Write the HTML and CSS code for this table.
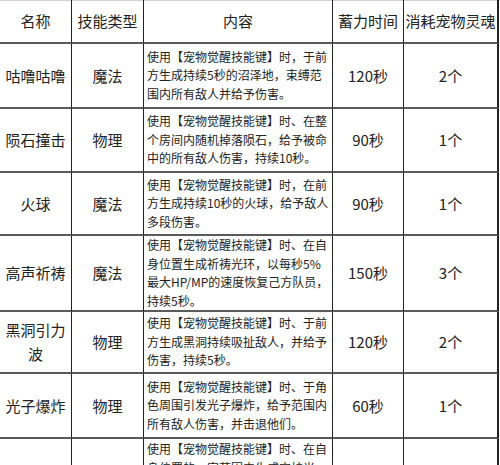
FILE: index.html
```html
<!DOCTYPE html>
<html lang="zh-CN">
<head>
<meta charset="utf-8">
<link rel="stylesheet" href="styles.css">
</head>
<body>
<div class="grid">
  <div class="c h">名称</div>
  <div class="c h">技能类型</div>
  <div class="c h">内容</div>
  <div class="c h">蓄力时间</div>
  <div class="c h last">消耗宠物灵魂</div>

  <div class="c n">咕噜咕噜</div>
  <div class="c n">魔法</div>
  <div class="c d">使用【宠物觉醒技能键】时，于前<br>方生成持续5秒的沼泽地，束缚范<br>围内所有敌人并给予伤害。</div>
  <div class="c n">120秒</div>
  <div class="c n last">2个</div>

  <div class="c n">陨石撞击</div>
  <div class="c n">物理</div>
  <div class="c d">使用【宠物觉醒技能键】时、在整<br>个房间内随机掉落陨石，给予被命<br>中的所有敌人伤害，持续10秒。</div>
  <div class="c n">90秒</div>
  <div class="c n last">1个</div>

  <div class="c n">火球</div>
  <div class="c n">魔法</div>
  <div class="c d">使用【宠物觉醒技能键】时，在前<br>方生成持续10秒的火球，给予敌人<br>多段伤害。</div>
  <div class="c n">90秒</div>
  <div class="c n last">1个</div>

  <div class="c n">高声祈祷</div>
  <div class="c n">魔法</div>
  <div class="c d">使用【宠物觉醒技能键】时、在自<br>身位置生成祈祷光环，以每秒5%<br>最大HP/MP的速度恢复己方队员，<br>持续5秒。</div>
  <div class="c n">150秒</div>
  <div class="c n last">3个</div>

  <div class="c n wrap">黑洞引力波</div>
  <div class="c n">物理</div>
  <div class="c d">使用【宠物觉醒技能键】时、于前<br>方生成黑洞持续吸扯敌人，并给予<br>伤害，持续5秒。</div>
  <div class="c n">120秒</div>
  <div class="c n last">2个</div>

  <div class="c n">光子爆炸</div>
  <div class="c n">物理</div>
  <div class="c d">使用【宠物觉醒技能键】时、于角<br>色周围引发光子爆炸，给予范围内<br>所有敌人伤害，并击退他们。</div>
  <div class="c n">60秒</div>
  <div class="c n last">1个</div>

  <div class="c n"></div>
  <div class="c n"></div>
  <div class="c d top">使用【宠物觉醒技能键】时、在自<br>身位置的一定范围内生成守护光</div>
  <div class="c n"></div>
  <div class="c n last"></div>
</div>
</body>
</html>
```

FILE: styles.css
```css
html, body {
  margin: 0;
  padding: 0;
  overflow: hidden;
  background: #fff;
}

.grid {
  display: grid;
  grid-template-columns: 72px 72px 189px 71px 95px;
  grid-template-rows: 43px 65px 64px 63px 76px 62px 65px 94px;
  border-top: 1px solid #d0d0d0;
  font-family: "Noto Sans CJK SC", "Microsoft YaHei", sans-serif;
  color: #222;
}

.c {
  box-sizing: border-box;
  border-right: 1px solid #222;
  border-bottom: 2px solid #5a5a5a;
  display: flex;
  align-items: center;
  justify-content: center;
  text-align: center;
  white-space: nowrap;
  overflow: hidden;
}

.c.last {
  border-right: 2px solid #222;
}

.h, .n {
  font-size: 15px;
  line-height: 24px;
}

.h {
  margin-top: -1px;
}

.wrap {
  white-space: normal;
  padding: 0 4px;
}

.d {
  justify-content: flex-start;
  text-align: left;
  font-size: 12px;
  line-height: 18.5px;
  padding-left: 3px;
}

.d.top {
  align-items: flex-start;
  padding-top: 1px;
}
```
